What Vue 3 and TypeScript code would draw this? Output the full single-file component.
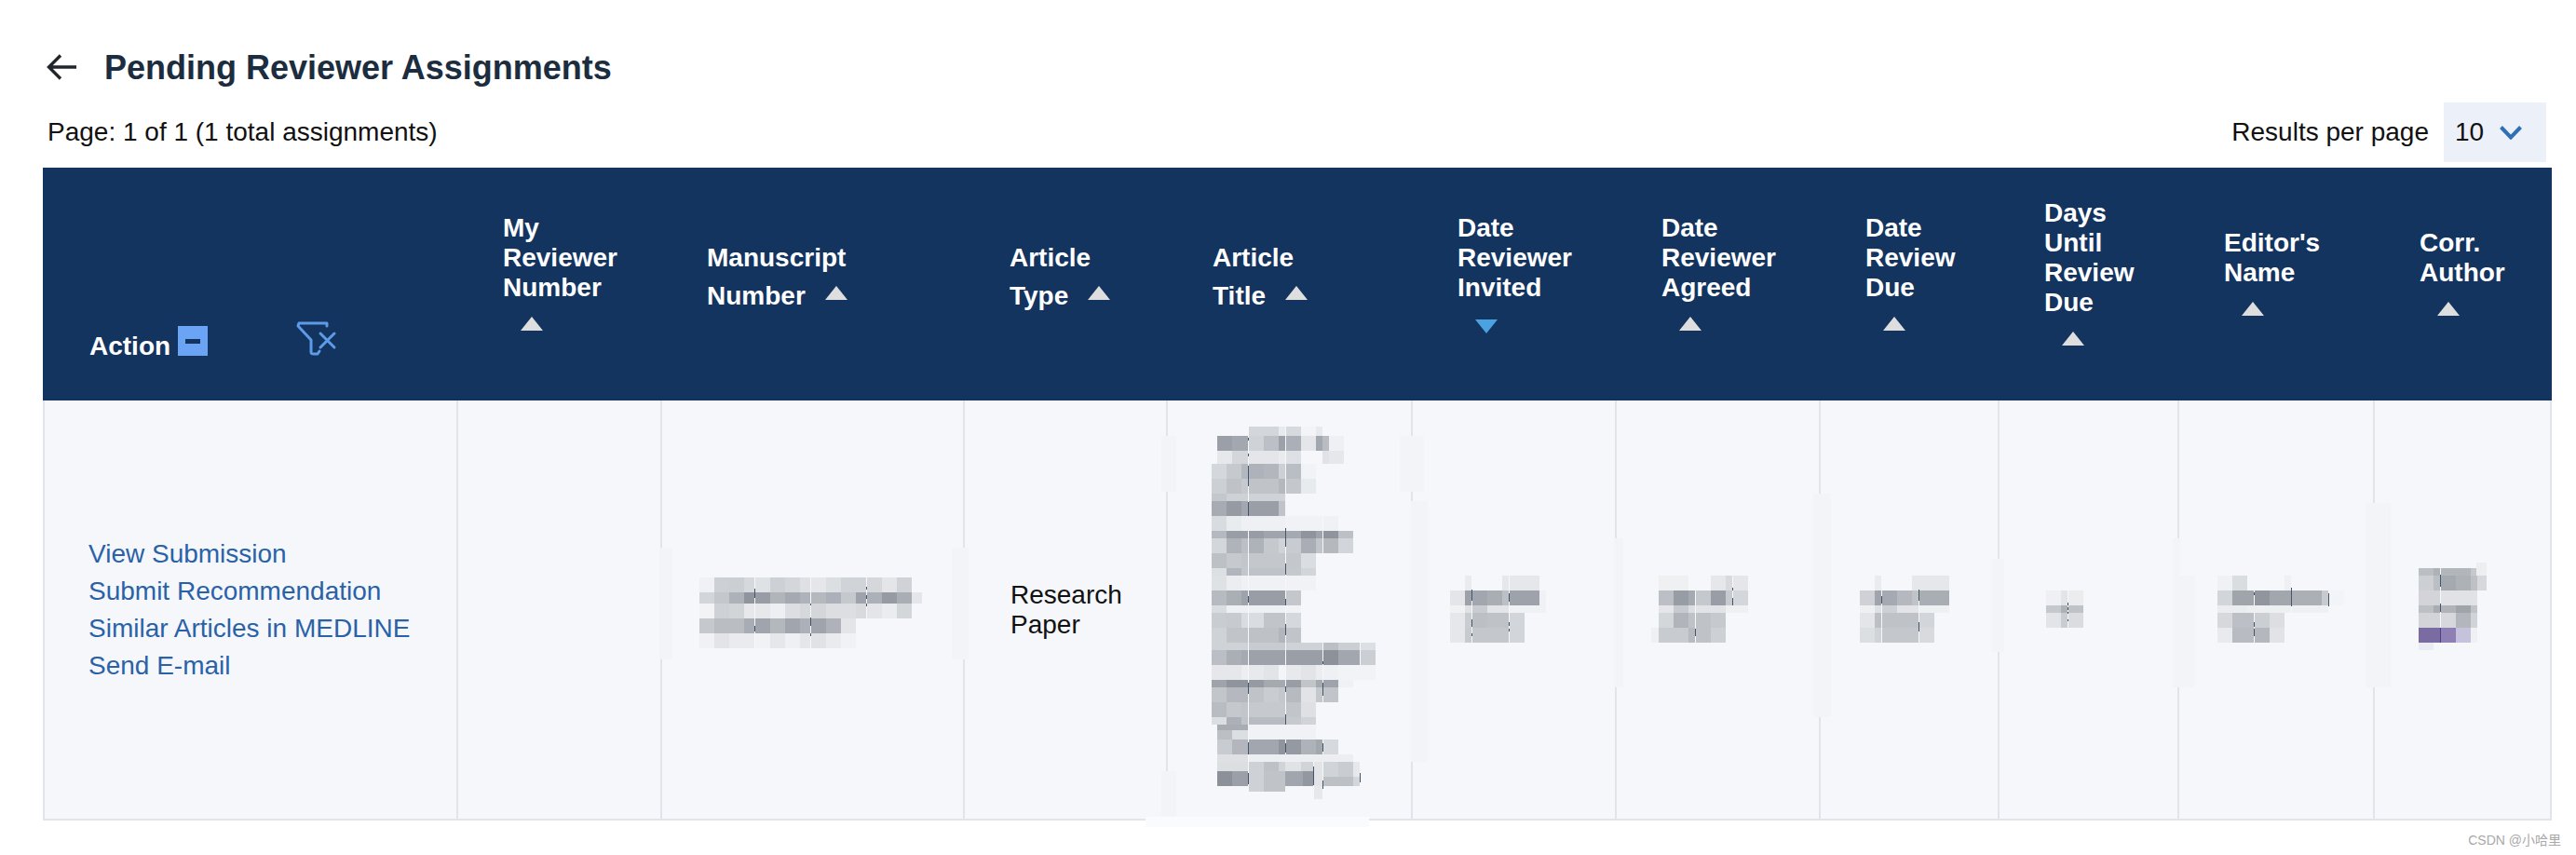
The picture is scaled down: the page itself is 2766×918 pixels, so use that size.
<template>
  <div class="page">
    <div class="title-row">
      <svg class="back" viewBox="0 0 32 28" width="32" height="28" fill="none" stroke="#22262b" stroke-width="3.4">
        <path d="M32 14H3M15 1.5L2.5 14L15 26.5" />
      </svg>
      <h1>Pending Reviewer Assignments</h1>
    </div>

    <div class="toolbar">
      <span>Page: 1 of 1 (1 total assignments)</span>
      <div class="per-page">
        <span>Results per page</span>
        <div class="select">
          <span>10</span>
          <svg viewBox="0 0 24 15" width="24" height="15" fill="none" stroke="#2f6fb5" stroke-width="4">
            <path d="M1.5 1.5L12 12.5L22.5 1.5" />
          </svg>
        </div>
      </div>
    </div>

    <table>
      <colgroup>
        <col v-for="w in colWidths" :key="w.id" :style="{ width: w.px + 'px' }" />
      </colgroup>
      <thead>
        <tr>
          <th class="action-head">
            <div class="action-wrap">
              <span class="action-label">Action</span>
              <span class="collapse"><i></i></span>
              <svg class="filter" viewBox="0 0 44 40" width="44" height="40" fill="none" stroke="#5c9be8" stroke-width="3" stroke-linecap="round" stroke-linejoin="round">
                <path d="M33 6V3H3L2 6L16 21V34C16 36 17 36 19 36H23L25 33" />
                <path d="M26 14L41 29M41 14L26 29" />
              </svg>
            </div>
          </th>
          <th v-for="h in headers" :key="h.lines.join()" :class="{ tight: h.inline }">
            <template v-for="(line, i) in h.lines" :key="line">
              <br v-if="i > 0" />{{ line }}
            </template>
            <span v-if="h.inline" class="sort inline"></span>
            <span v-else class="sort below" :class="{ desc: h.desc }"></span>
          </th>
        </tr>
      </thead>
      <tbody>
        <tr>
          <td class="links">
            <a v-for="l in actions" :key="l" href="#">{{ l }}</a>
          </td>
          <td></td>
          <td class="blur"><Mosaic :m="manuscript" /></td>
          <td class="type">Research<br />Paper</td>
          <td class="blur"><Mosaic :m="title" /></td>
          <td class="blur"><Mosaic :m="invited" /></td>
          <td class="blur"><Mosaic :m="agreed" /></td>
          <td class="blur"><Mosaic :m="due" /></td>
          <td class="blur"><Mosaic :m="days" /></td>
          <td class="blur"><Mosaic :m="editor" /></td>
          <td class="blur"><Mosaic :m="corr" /></td>
        </tr>
      </tbody>
    </table>

    <!-- leftovers of the redaction, they sit over the grid lines -->
    <div
      v-for="p in patches"
      :key="p.join()"
      class="patch"
      :style="{ left: p[0] + 'px', top: p[1] + 'px', width: p[2] + 'px', height: p[3] + 'px' }"
      :class="{ pale: p[1] > 870 }"
    ></div>

    <div class="watermark">CSDN @小哈里</div>
  </div>
</template>

<script setup lang="ts">
import { h as hx, type FunctionalComponent } from 'vue'

interface Box { x: number; y: number; w: number; h: number; fill: string }
interface Blur { left: number; vx: number; vw: number; vh: number; boxes: Box[] }
interface Head { lines: string[]; inline?: boolean; desc?: boolean }

// rows look like "y0 y1: x0 x1 color, x0 x1 color", dashes "x: y0 y1, y0 y1"
function blur(left: number, vx: number, vw: number, vh: number, rows: string[], dashes: string[]): Blur {
  const boxes: Box[] = []
  for (const row of rows) {
    const [ys, cells] = row.split(':')
    const [y0, y1] = ys.trim().split(' ').map(Number)
    for (const c of cells.split(',')) {
      const [x0, x1, col] = c.trim().split(' ')
      boxes.push({ x: +x0, y: y0, w: +x1 - +x0, h: y1 - y0, fill: '#' + col })
    }
  }
  for (const d of dashes) {
    const [xs, parts] = d.split(':')
    for (const p of parts.split(',')) {
      const [a, b] = p.trim().split(' ').map(Number)
      boxes.push({ x: +xs - 1.5, y: a, w: 3, h: b - a, fill: '#46566a' })
    }
  }
  return { left, vx, vw, vh, boxes }
}

const Mosaic: FunctionalComponent<{ m: Blur }> = (props) => {
  const m = props.m
  return hx(
    'svg',
    {
      viewBox: `${m.vx} 0 ${m.vw} ${m.vh}`,
      width: m.vw / 3,
      height: m.vh / 3,
      style: { display: 'block', marginLeft: m.left + 'px' },
      'shape-rendering': 'crispEdges',
    },
    m.boxes.map((b) => hx('rect', { x: b.x, y: b.y, width: b.w, height: b.h, fill: b.fill })),
  )
}

const colWidths = [444, 219, 325, 218, 263, 219, 219, 192, 193, 210, 192].map((px, id) => ({ id, px }))

const headers: Head[] = [
  { lines: ['My', 'Reviewer', 'Number'] },
  { lines: ['Manuscript', 'Number'], inline: true },
  { lines: ['Article', 'Type'], inline: true },
  { lines: ['Article', 'Title'], inline: true },
  { lines: ['Date', 'Reviewer', 'Invited'], desc: true },
  { lines: ['Date', 'Reviewer', 'Agreed'] },
  { lines: ['Date', 'Review', 'Due'] },
  { lines: ['Days', 'Until', 'Review', 'Due'] },
  { lines: ["Editor's", 'Name'] },
  { lines: ['Corr.', 'Author'] },
]

const actions = ['View Submission', 'Submit Recommendation', 'Similar Articles in MEDLINE', 'Send E-mail']

const patches: number[][] = [
  [708, 588, 14, 120], [1022, 588, 18, 120],
  [1247, 468, 16, 60], [1503, 468, 26, 60], [1515, 538, 18, 280], [1247, 828, 16, 49],
  [1733, 578, 10, 160], [1947, 530, 19, 240], [2139, 600, 13, 100],
  [2333, 578, 8, 40], [2333, 618, 24, 120], [2540, 540, 27, 198],
  [1230, 877, 240, 11],
]

const manuscript = blur(39, 60, 720, 330, [
  '60 108: 62 110 f0f1f4, 110 158 cdd0d4, 158 206 cbced3, 206 240 d5d8dc, 242 290 dfe2e5, 290 338 cdd0d4, 338 386 d3d6da, 386 420 dee0e4, 422 470 e4e6e9, 470 518 dcdfe2, 518 600 d0d3d7, 602 650 d5d7db, 650 698 e3e5e8, 698 746 cfd2d6',
  '108 144: 62 110 d2d5d9, 110 158 c4c7cc, 158 206 adb1b8, 206 240 8f949d, 242 290 979ca5, 290 338 b1b4b9, 338 386 a5a9b1, 386 420 aeb2ba, 422 470 b5b8bc, 470 518 acb0b8, 518 566 c5c8cc, 566 600 9ea2ab, 602 650 acb0b8, 650 698 959aa3, 698 746 a9adb4, 746 780 e4e6ea',
  '144 192: 62 110 f1f3f5, 110 158 ced1d5, 158 206 d2d5d8, 206 240 e6e8eb, 242 290 e6e8ea, 290 338 eeeff2, 338 386 dcdee2, 386 420 d6d9dc, 422 470 d4d6da, 470 566 dcdee2, 566 600 d8dade, 602 650 e3e5e8, 650 698 ebecef, 698 746 d4d7da',
  '192 240: 62 110 c5c8cc, 110 158 babdc2, 158 206 babdc1, 206 240 a8acb4, 242 290 a0a4ad, 290 338 b4b8bc, 338 386 a1a5ae, 386 420 acb0b8, 422 470 a0a4ad, 470 518 afb2b8, 518 566 e3e5e9',
  '240 288: 62 110 f0f1f4, 110 158 e2e4e7, 158 240 e9ebee, 242 290 f0f2f4, 290 338 e5e7ea, 338 386 eff0f3, 386 420 e4e6e9, 422 470 e0e2e6, 470 518 e9ebee, 518 566 f1f2f5',
], ['241: 95 125, 215 235', '421: 145 150, 190 215, 240 250', '601: 90 100, 118 130, 145 152'])

const title = blur(46, 60, 540, 1230, [
  '24 54: 182 278 d3d6db, 278 300 e8eaee, 302 350 d6d9de, 350 398 f2f4f7, 398 420 e8eaee',
  '54 102: 80 128 9a9fa8, 128 180 a3a8b0, 182 230 cfd2d7, 230 278 bcbfc5, 278 300 9da2aa, 302 350 abb0b8, 350 398 e4e6ea, 398 420 a3a8b0, 420 440 b9bcc3, 440 488 eef0f3',
  '102 144: 80 128 e6e8eb, 128 180 d3d6da, 182 278 e4e6ea, 278 300 e9ebef, 302 350 dde0e4, 420 440 e0e2e7, 440 488 e5e7ea',
  '144 192: 62 110 d4d7db, 110 158 c6c9ce, 158 180 b3b7be, 182 230 aeb2ba, 230 278 b3b7bd, 278 300 cdd0d5, 302 350 b9bdc4, 350 398 f1f3f6',
  '192 240: 62 110 ccd0d4, 110 158 bfc3c8, 158 180 c6c9cd, 182 278 c0c3c8, 278 300 b5b9bf, 302 350 c4c7cc, 350 398 e8ebee',
  '240 264: 62 110 c4c8cc, 110 180 ced1d5, 182 300 cfd2d7',
  '264 312: 62 110 a7abb2, 110 158 959aa3, 158 180 a3a7af, 182 278 9a9ea6, 278 300 c0c3c9',
  '312 360: 62 110 d8dbdf, 110 158 e9ecef, 158 300 eef0f3, 300 420 f0f2f5, 422 470 f0f1f4',
  '360 384: 62 110 b5b8bf, 110 180 989da6, 182 230 979ca5, 230 300 a0a4ac, 302 350 a5a9b1, 350 398 8f949d, 398 420 9fa3ab, 422 470 8f949d, 470 518 bdc0c6',
  '384 432: 62 110 d3d6da, 110 158 afb3ba, 158 180 bcbfc5, 182 230 aeb2b9, 230 278 c5c8cd, 278 300 d0d3d7, 302 350 c8cbd0, 350 398 a9adb5, 398 420 c1c4ca, 422 470 b5b9bd, 470 518 d2d5d9',
  '432 480: 62 110 bdc0c5, 110 158 c6c9ce, 158 180 c3c6cb, 182 300 c4c7cc, 302 350 c4c7cc, 350 398 dadde1',
  '480 504: 62 110 dde0e3, 110 158 b1b5bd, 158 180 c3c6cb, 182 300 bfc2c8, 302 350 c5c8cd, 350 398 d2d5d9',
  '504 552: 62 110 dfe2e5, 110 158 ecedf0, 158 180 f0f1f4, 182 300 f0f1f4, 302 398 f1f2f5',
  '552 600: 62 110 b7bac0, 110 158 aaaeb5, 158 180 9ea2aa, 182 300 999da5, 302 350 c4c7cc',
  '600 624: 62 110 d9dce0, 110 180 eef0f3, 182 300 eef0f3, 302 350 f0f2f5',
  '624 672: 62 110 c9ccd1, 110 158 c7cace, 158 180 d9dce0, 182 230 d9dce0, 230 300 c1c4c9, 302 350 d5d8dc',
  '672 720: 62 110 cfd2d6, 110 180 c1c4c9, 182 278 bec1c6, 278 300 b2b5bc, 302 350 c1c4c9',
  '720 744: 62 180 cfd2d6, 182 300 c8cbd0, 302 420 cfd2d6, 422 470 bcbfc5, 470 540 cbced3, 542 590 dcdfe3',
  '744 792: 62 110 bbbec4, 110 158 aaaeb5, 158 180 a5a9b1, 182 300 9da1a9, 302 420 9a9ea6, 422 470 8c919a, 470 540 a2a6ae, 542 590 cbced3',
  '792 840: 62 158 e5e7ea, 158 180 eceef0, 182 230 e7e9ec, 230 278 e2e4e8, 278 300 f3f5f8, 302 350 e7e9ec, 350 398 e2e4e7, 398 420 ebedf0, 422 470 eef0f3, 470 590 f2f3f6',
  '840 864: 62 110 9fa3ab, 110 180 8f949d, 182 230 969aa3, 230 300 a5a9b0, 302 350 999da5, 350 398 c1c4c9, 398 420 a5a9b0, 422 470 9fa3ab, 470 518 eff1f4',
  '864 912: 62 110 c2c5ca, 110 180 b5b8be, 182 230 c0c3c8, 230 278 c9ccd0, 278 300 c4c7cc, 302 350 b7bac0, 350 398 e1e3e7, 398 420 c4c7cc, 422 470 c1c4c9',
  '912 960: 62 110 b9bcc2, 110 158 c5c8cc, 158 180 c2c5ca, 182 300 c6c9cd, 302 350 c2c5ca, 350 398 dee0e4',
  '960 984: 62 110 dcdfe2, 110 158 acb0b8, 158 180 c0c3c8, 182 300 b8bbc1, 302 350 c6c9ce, 350 398 d0d3d7',
  '984 1002: 80 180 a8acb3, 182 398 f0f2f5',
  '1002 1032: 80 128 bcbfc4, 128 180 dcdfe2, 182 398 f0f2f5',
  '1032 1080: 80 128 c8cbd0, 128 180 b3b6bc, 182 278 a2a6ae, 278 300 8f949d, 302 350 959aa2, 350 398 aeb2b9, 398 420 a3a7ae, 422 470 d6d9dd',
  '1080 1104: 80 180 dee0e4, 182 518 eceef1',
  '1104 1134: 80 180 dcdfe2, 182 230 ced1d5, 230 278 bec1c6, 278 300 d0d3d7, 300 350 e0e2e6, 350 390 d0d3d7, 392 420 e2e4e7, 422 470 d0d3d7, 470 518 c9ccd1, 518 540 e6e8eb',
  '1134 1152: 80 128 8b9099, 128 180 9b9fa7, 182 230 ced1d5, 230 300 c0c3c8, 300 358 a1a5ad, 358 390 9297a0, 392 420 e2e4e7, 422 470 d0d3d7, 470 518 c9ccd1, 518 540 e6e8eb',
  '1152 1182: 80 128 8b9099, 128 180 9b9fa7, 182 230 ced1d5, 230 300 c0c3c8, 300 358 a1a5ad, 358 390 9297a0, 392 420 e2e4e7, 422 518 bdc0c5, 518 540 d3d6da',
  '1182 1200: 182 230 ced1d5, 230 300 c0c3c8, 392 420 e6e8eb',
  '1200 1224: 392 420 e6e8eb',
], [
  '181: 60 70, 110 120, 150 215, 268 312, 570 590, 850 885, 1040 1080, 1140 1175',
  '301: 350 410, 465 500, 580 600, 660 695, 860 880, 950 985, 1045 1075',
  '421: 780 790, 850 890, 1045 1070, 1165 1190',
  '391: 1120 1180',
  '541: 1140 1170',
])

const invited = blur(39, 48, 315, 330, [
  '54 102: 98 120 e9ebee, 220 240 e5e7ea, 244 340 e5e7ea',
  '102 150: 50 98 e3e5e8, 98 120 9da1a9, 122 170 a2a6ae, 170 218 a9adb4, 218 240 bcbfc5, 244 340 9ea2aa, 340 360 f0f1f4',
  '150 174: 50 98 f0f2f4, 98 120 dfe1e4, 122 170 c9ccd1, 170 240 e2e4e7, 244 360 f0f1f4',
  '174 222: 50 98 e5e7ea, 98 120 c9ccd0, 122 170 bcbfc4, 170 240 bfc2c7, 242 290 d2d5d9',
  '222 270: 50 98 e5e7ea, 98 120 c7cacf, 122 240 c4c7cb, 242 290 d2d5d9',
], ['121: 100 135, 195 220, 240 248', '241: 110 138, 205 215, 225 235'])

const agreed = blur(36, 696, 318, 330, [
  '54 102: 724 820 eef0f2, 892 940 e5e7ea, 940 960 d8dade, 962 1010 e4e6e9',
  '102 150: 724 772 bcbfc5, 772 820 979ca5, 820 840 a5a9b1, 842 890 c5c8cc, 890 940 999da6, 940 960 c7cace, 962 1010 d3d6da',
  '150 174: 724 772 e4e6e9, 772 820 c7cace, 820 840 dcdee2, 842 940 e1e3e6, 940 1010 eef0f2',
  '174 222: 724 772 d4d7da, 772 820 b1b4bb, 820 840 bfc2c7, 842 890 bfc2c7, 890 940 c6c9cd',
  '222 270: 700 724 eef0f2, 724 820 c8cbcf, 820 840 b7bac0, 842 890 bfc2c7, 890 940 cdd0d4',
], ['961: 92 102, 125 150', '841: 225 248'])

const due = blur(41, 1368, 294, 330, [
  '54 102: 1420 1440 e9ebee, 1538 1660 e5e7ea',
  '102 150: 1370 1418 cfd1d6, 1418 1440 a0a4ad, 1442 1490 a5a9b1, 1490 1540 b5b8be, 1540 1560 c0c3c8, 1562 1660 a9adb4',
  '150 174: 1370 1418 eef0f2, 1418 1440 dfe1e4, 1442 1490 cdd0d4, 1490 1560 e2e4e7, 1562 1660 eef0f2',
  '174 222: 1370 1418 e3e5e8, 1418 1440 bcbfc5, 1442 1560 bfc2c7, 1562 1610 d2d5d9',
  '222 270: 1370 1418 dcdfe2, 1418 1440 d0d3d7, 1442 1560 c4c7cb, 1562 1610 d8dade',
], ['1441: 120 145', '1561: 100 135, 205 235'])

const days = blur(49, 48, 126, 330, [
  '102 150: 50 98 eff0f3, 98 120 e2e4e7, 122 170 eaecee',
  '150 174: 50 98 c5c8cd, 98 120 aeb1b8, 122 170 bfc2c7',
  '174 222: 50 98 e2e4e7, 98 120 c9ccd0, 122 170 dadce0',
], ['121: 142 150, 155 165, 170 178, 195 202'])

const editor = blur(40, 600, 414, 330, [
  '54 102: 604 652 f0f1f4, 652 700 dadde0, 820 840 eff0f3',
  '102 150: 604 652 d2d5d9, 652 720 a0a4ab, 722 772 91969e, 772 840 a2a6ad, 842 940 acb0b6, 940 960 c7cace, 962 1010 f3f4f7',
  '150 174: 604 700 eaecef, 700 840 edeff1, 842 960 eff0f3',
  '174 222: 604 652 d6d8dc, 652 720 bcbfc5, 722 772 cbced2, 772 820 dcdee2',
  '222 270: 604 652 e8eaed, 652 720 b8bbc1, 722 772 b4b7bd, 772 820 e1e3e6',
], ['721: 108 118, 205 218, 225 248', '841: 92 152', '962: 112 152'])

const corr = blur(46, 1248, 225, 330, [
  '12 30: 1438 1470 eceef0',
  '30 54: 1252 1300 bbbec3, 1300 1320 aeb1b7, 1324 1420 b3b6bb, 1420 1438 c5c8cc, 1438 1470 eceef0',
  '54 102: 1252 1300 cccfd3, 1300 1320 bbbec3, 1324 1372 a5a9b0, 1372 1420 aeb1b6, 1420 1440 bdc0c5, 1440 1470 d6d8dc',
  '102 150: 1252 1320 d2d4d8, 1324 1440 e0e2e5',
  '150 174: 1252 1300 bdc0c5, 1300 1320 a9acb3, 1324 1372 b0b3b9, 1372 1420 a0a4ab, 1420 1440 c0c3c8',
  '174 222: 1252 1320 d2d4d8, 1324 1372 d6d8de, 1372 1420 b3b6bc, 1420 1440 d0d3d7',
  '222 270: 1252 1320 7b6ba3, 1320 1324 4d3d8a, 1324 1372 8e80b4, 1372 1420 c6c2dc, 1420 1440 eef0f4',
  '270 294: 1252 1300 ebebf3',
], ['1322: 50 90, 145 170'])
</script>

<style scoped>
.page {
  position: relative;
  width: 2766px;
  height: 918px;
  padding: 50px 0 0 46px;
  box-sizing: border-box;
  overflow: hidden;
  background: #fff;
  font-family: "Liberation Sans", Arial, sans-serif;
  font-size: 28px;
  color: #111;
}

.title-row {
  display: flex;
  align-items: center;
  height: 44px;
  padding-left: 4px;
  margin-bottom: 16px;
}

.back {
  margin-right: 30px;
}

h1 {
  margin: 2px 0 0;
  font-size: 36px;
  font-weight: 700;
  color: #1b2d3e;
}

.toolbar {
  display: flex;
  align-items: center;
  justify-content: space-between;
  width: 2688px;
  height: 64px;
  padding-left: 5px;
  margin-bottom: 6px;
  box-sizing: border-box;
}

.per-page {
  display: flex;
  align-items: center;
  gap: 16px;
}

.select {
  display: flex;
  align-items: center;
  justify-content: space-between;
  width: 110px;
  height: 64px;
  padding: 0 26px 0 12px;
  box-sizing: border-box;
  background: #ecf0f8;
}

table {
  width: 2694px;
  table-layout: fixed;
  border-collapse: separate;
  border-spacing: 0;
}

th {
  height: 250px;
  padding: 0 0 26px 50px;
  box-sizing: border-box;
  background: #143460;
  color: #fff;
  font-size: 28px;
  line-height: 32px;
  font-weight: 700;
  text-align: left;
  vertical-align: middle;
}

th.tight {
  padding-bottom: 15px;
}

th.action-head {
  padding: 0 0 42px 50px;
  vertical-align: bottom;
}

.action-wrap {
  display: flex;
  align-items: flex-start;
}

.action-label {
  margin-top: 6px;
}

.collapse {
  display: flex;
  align-items: center;
  justify-content: center;
  width: 32px;
  height: 32px;
  margin-left: 8px;
  background: #6ba4f4;
}

.collapse i {
  display: block;
  width: 16px;
  height: 5px;
  background: #143460;
}

.filter {
  margin: -6px 0 0 95px;
}

.sort {
  display: block;
  width: 0;
  height: 0;
  border-left: 12px solid transparent;
  border-right: 12px solid transparent;
  border-bottom: 15px solid #dedede;
}

.sort.inline {
  display: inline-block;
  margin: 14px 0 0 21px;
  vertical-align: 5px;
}

.sort.below {
  margin: 15px 0 0 19px;
}

.sort.below.desc {
  margin: 18px 0 -3px 19px;
  border-bottom: 0;
  border-top: 15px solid #4aa3e0;
}

td {
  height: 451px;
  padding: 0;
  box-sizing: border-box;
  background: #f5f7fb;
  border-left: 2px solid #e1e4e9;
  border-bottom: 2px solid #e1e4e9;
  vertical-align: middle;
}

td:last-child {
  border-right: 2px solid #e1e4e9;
}

.links {
  padding: 1px 0 0 47px;
}

.links a {
  display: block;
  line-height: 40px;
  color: #2a62a8;
  text-decoration: none;
}

.type {
  padding: 1px 0 0 49px;
  line-height: 32px;
}

.patch {
  position: absolute;
  background: #f3f4f8;
}

.patch.pale {
  background: #fafbfc;
}

.watermark {
  position: absolute;
  right: 16px;
  top: 892px;
  font-size: 14px;
  line-height: 20px;
  color: #a9a9a9;
  font-family: "Liberation Sans", "Noto Sans CJK SC", sans-serif;
}
</style>
